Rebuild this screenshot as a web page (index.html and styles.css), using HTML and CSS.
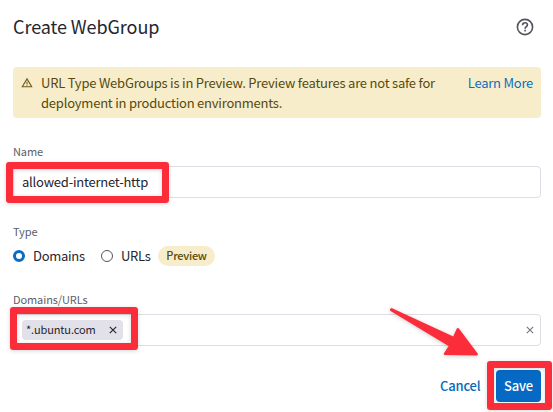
FILE: index.html
```html
<!DOCTYPE html>
<html lang="en">
<head>
<meta charset="utf-8">
<title>Create WebGroup</title>
<link rel="stylesheet" href="styles.css">
</head>
<body>
<main class="dialog">
  <header class="header">
    <h1 class="title">Create WebGroup</h1>
    <svg class="help" viewBox="0 0 18 18" fill="none" stroke="#53535e" stroke-width="1.6"><circle cx="9" cy="9" r="7.6"/><path d="M6.6 7.2c0-1.5 1-2.4 2.4-2.4s2.4.9 2.4 2.1c0 1.7-2.3 1.8-2.3 3.8"/><path d="M9.1 11.8v1.7"/></svg>
  </header>
  <section class="banner">
    <svg class="warning" viewBox="0 0 12 12" fill="none" stroke="#6b5c1d" stroke-width="1.1"><path d="M6 1.9 10.7 9.7H1.3Z"/><path d="M6 4.7v2.2M6 7.6v1.1"/></svg>
    <p class="message">URL Type WebGroups is in Preview. Preview features are not safe for<br>deployment in production environments.</p>
    <a class="learn">Learn More</a>
  </section>
  <section class="field name-field">
    <div class="label">Name</div>
    <div class="input"><span class="value">allowed-internet-http</span></div>
  </section>
  <section class="field type-field">
    <div class="label">Type</div>
    <div class="options">
      <span class="radio checked"></span><span class="option domains">Domains</span>
      <span class="radio"></span><span class="option urls">URLs</span>
      <span class="badge">Preview</span>
    </div>
  </section>
  <section class="field domain-field">
    <div class="label domain-label">Domains/URLs</div>
    <div class="input tags">
      <span class="chip"><span class="chip-text">*.ubuntu.com</span><svg class="remove" viewBox="0 0 8 8" stroke="#25252f" stroke-width="1.15"><path d="m.8.8 6.4 6.4M7.2.8.8 7.2"/></svg></span>
      <svg class="clear" viewBox="0 0 8 8" stroke="#777782" stroke-width="1.1"><path d="m.8.8 6.4 6.4M7.2.8.8 7.2"/></svg>
    </div>
  </section>
  <footer class="footer">
    <span class="cancel">Cancel</span>
    <span class="save">Save</span>
  </footer>
</main>
<div class="mark mark-name"></div>
<div class="mark mark-domain"></div>
<div class="mark mark-save"></div>
<svg class="arrow" viewBox="0 0 100 60"><path d="M11.2 9.8 70.4 45.7 65.2 53.8 96.6 54.2 77.9 29.4 73.9 38.1 11.6 9.4Z" fill="#fb2d3b" stroke="#fb2d3b" stroke-width="2.6" stroke-linejoin="round"/></svg>
</body>
</html>
```

FILE: styles.css
```css
* { box-sizing: border-box; }
body {
  margin: 0;
  width: 553px;
  height: 412px;
  overflow: hidden;
  background: #fff;
  color: #25252f;
  font: 14px/20px "Noto Sans CJK SC", "Open Sans", sans-serif;
  white-space: nowrap;
}
.dialog { padding: 13px 12px 0 13px; }
.header { display: flex; align-items: center; justify-content: space-between; height: 28px; padding-right: 7px; }
.title { margin: 0; font-size: 18px; line-height: 28px; font-weight: 400; letter-spacing: -.07px; padding-bottom: 2px; }
.help { width: 18px; height: 18px; }
.banner {
  display: flex;
  align-items: flex-start;
  height: 51px;
  margin-top: 26px;
  padding: 6px 8px 0 8px;
  border-radius: 4px;
  background: #f8edca;
  color: #564a0d;
}
.warning { width: 12px; height: 12px; margin: 4px 8px 0 0; }
.message { margin: 0; font-size: 13px; letter-spacing: -.215px; }
.learn { margin-left: auto; font-size: 13px; letter-spacing: -.25px; color: #0a6dc2; }
.label { height: 16px; font-size: 11px; line-height: 14px; letter-spacing: -.1px; color: #5d5d67; }
.name-field { margin-top: 26px; }
.input {
  display: flex;
  align-items: center;
  height: 32px;
  margin-top: 6px;
  padding: 0 8px;
  border: 1px solid #dedee4;
  border-radius: 4px;
}
.value { font-size: 13px; letter-spacing: -.22px; }
.type-field { margin-top: 26px; }
.options { display: flex; align-items: center; height: 20px; margin-top: 6px; }
.radio { width: 12px; height: 12px; border: 1px solid #53535e; border-radius: 50%; }
.checked { border: 3.5px solid #0a6dc2; }
.option { margin-left: 8px; font-size: 13px; letter-spacing: -.3px; }
.domains { width: 52px; margin-right: 16px; }
.urls { width: 29px; margin-right: 8px; }
.badge {
  width: 57px;
  height: 20px;
  border-radius: 10px;
  background: #f8edca;
  color: #564a0d;
  font-size: 11px;
  line-height: 18px;
  font-weight: 500;
  letter-spacing: -.25px;
  text-align: center;
}
.domain-field { margin-top: 26px; }
.tags { justify-content: space-between; padding-right: 6px; }
.chip {
  display: flex;
  align-items: center;
  justify-content: space-between;
  width: 101px;
  height: 20px;
  padding: 0 6px 0 4px;
  border-radius: 4px;
  background: #e2e0e8;
  font-size: 11px;
  line-height: 18px;
  letter-spacing: -.12px;
}
.chip-text { height: 20px; }
.remove, .clear { width: 8px; height: 8px; }
.footer { display: flex; justify-content: flex-end; margin-top: 24px; font-size: 13px; line-height: 32px; font-weight: 500; letter-spacing: -.2px; }
.cancel { width: 40px; margin-right: 16px; color: #0669b8; }
.save { width: 45px; height: 32px; border-radius: 4px; background: #0669c4; color: #fff; text-align: center; }
.mark {
  position: absolute;
  border: 7px solid #fb2d3b;
  border-radius: 3px;
  box-shadow: 0 1px 4px rgba(0, 0, 0, .16), inset 0 1px 4px rgba(0, 0, 0, .16);
}
.mark-name { left: 6px; top: 162px; width: 163px; height: 41px; }
.mark-domain { left: 10px; top: 307px; width: 128px; height: 43px; }
.mark-save { left: 487px; top: 361px; width: 65px; height: 49px; }
.arrow { position: absolute; left: 380px; top: 300px; width: 100px; height: 60px; filter: drop-shadow(0 1px 2px rgba(0, 0, 0, .2)); }
```
